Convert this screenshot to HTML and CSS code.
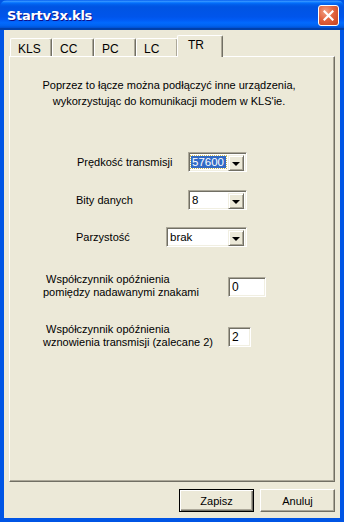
FILE: index.html
```html
<!DOCTYPE html>
<html lang="pl">
<head>
  <meta charset="UTF-8">
  <title>Startv3x.kls</title>
  <link rel="stylesheet" href="styles.css">
</head>
<body>

  <div class="window">
    <!-- Pasek tytułu -->
    <div class="titlebar">
      <span class="title">Startv3x.kls</span>
      <button class="close-btn" aria-label="Zamknij">
        <svg width="11" height="11" viewBox="0 0 11 11">
          <path d="M1.5 1.5 L9.5 9.5 M9.5 1.5 L1.5 9.5" stroke="#fff" stroke-width="2.2" stroke-linecap="square"/>
        </svg>
      </button>
    </div>

    <div class="client">
      <!-- Zakładki -->
      <div class="tabs">
        <div class="tab">KLS</div>
        <div class="tab">CC</div>
        <div class="tab">PC</div>
        <div class="tab">LC</div>
        <div class="tab active">TR</div>
      </div>

      <div class="panel">
        <p class="intro">Poprzez to łącze można podłączyć inne urządzenia,<br>wykorzystując do komunikacji modem w KLS'ie.</p>

        <div class="field-row row-speed">
          <span class="label">Prędkość transmisji</span>
          <div class="combo">
            <div class="combo-value"><span class="selected">57600</span></div>
            <div class="combo-btn"><span class="arrow"></span></div>
          </div>
        </div>

        <div class="field-row row-bits">
          <span class="label">Bity danych</span>
          <div class="combo">
            <div class="combo-value">8</div>
            <div class="combo-btn"><span class="arrow"></span></div>
          </div>
        </div>

        <div class="field-row row-parity">
          <span class="label">Parzystość</span>
          <div class="combo combo-wide">
            <div class="combo-value">brak</div>
            <div class="combo-btn"><span class="arrow"></span></div>
          </div>
        </div>

        <div class="delay-row delay-chars">
          <span class="delay-label">&nbsp;Współczynnik opóźnienia<br>pomiędzy nadawanymi znakami</span>
          <div class="textbox textbox-wide">0</div>
        </div>

        <div class="delay-row delay-restart">
          <span class="delay-label">&nbsp;Współczynnik opóźnienia<br>wznowienia transmisji (zalecane 2)</span>
          <div class="textbox textbox-narrow">2</div>
        </div>
      </div>

      <!-- Przyciski -->
      <div class="buttons">
        <button class="btn btn-default">Zapisz</button>
        <button class="btn">Anuluj</button>
      </div>
    </div>
  </div>

</body>
</html>
```

FILE: styles.css
```css
/* Podstawowe */
body {
  margin: 0;
  width: 344px;
  height: 522px;
  overflow: hidden;
  font-family: 'Liberation Sans', Arial, sans-serif;
  font-size: 11px;
  color: #000;
}

.window {
  width: 344px;
  height: 522px;
  display: flex;
  flex-direction: column;
  background: #0055e5;
  box-sizing: border-box;
}

/* Pasek tytułu */
.titlebar {
  height: 30px;
  flex: none;
  display: flex;
  align-items: center;
  justify-content: space-between;
  padding: 0 5px 0 7px;
  background: linear-gradient(to bottom,
    #0058ee 0%, #3593ff 4%, #288eff 6%, #127dff 8%, #036ffc 10%,
    #0262ee 14%, #0057e5 20%, #0054e3 24%, #0055eb 56%, #005bf5 66%,
    #026afe 76%, #0062ef 86%, #0052d6 92%, #0040ab 94%, #0040ab 100%);
  border-radius: 7px 7px 0 0;
}

.title {
  color: #fff;
  font-family: 'DejaVu Sans', sans-serif;
  font-weight: bold;
  font-size: 13px;
  letter-spacing: -0.3px;
  text-shadow: 1px 1px #0f1089;
  margin-top: 1px;
}

.close-btn {
  width: 21px;
  height: 21px;
  padding: 0;
  border: 1px solid #fff;
  border-radius: 3px;
  background: radial-gradient(circle at 35% 30%, #f2a184 0%, #e2643f 45%, #c4401e 100%);
  display: flex;
  align-items: center;
  justify-content: center;
  margin-top: 1px;
}

/* Obszar klienta */
.client {
  flex: 1;
  display: flex;
  flex-direction: column;
  background: #ece9d8;
  margin: 0 4px 4px 4px;
  padding: 5px 5px 0 5px;
}

/* Zakładki */
.tabs {
  display: flex;
  align-items: flex-end;
  height: 21px;
  padding-left: 1px;
  position: relative;
  z-index: 1;
}

.tab {
  width: 42px;
  height: 18px;
  box-sizing: border-box;
  padding: 3px 0 0 7px;
  border-top: 1px solid #fff;
  border-left: 1px solid #fff;
  border-right: 1px solid #716f64;
  box-shadow: inset -1px 0 #aca899;
  border-radius: 2px 2px 0 0;
  background: #ece9d8;
  font-size: 12px;
}

.tab.active {
  width: 46px;
  height: 22px;
  margin: 0 -2px -1px -2px;
  padding: 2px 0 0 10px;
}

.tab + .tab.active {
  margin-left: -1px;
}

.panel {
  height: 426px;
  box-sizing: border-box;
  border-top: 1px solid #fff;
  border-left: 1px solid #fff;
  border-right: 1px solid #716f64;
  border-bottom: 1px solid #716f64;
  box-shadow: inset -1px -1px #aca899;
  background: #ece9d8;
}

.intro {
  margin: 20px 0 0 0;
  text-align: center;
  line-height: 16px;
  padding-right: 6px;
}

/* Wiersze z listami rozwijanymi */
.field-row {
  display: flex;
  align-items: center;
  justify-content: space-between;
  width: 171px;
  margin-left: 66px;
}

.row-speed { margin-top: 43px; margin-left: 67px; width: 170px; }
.row-bits { margin-top: 18px; }
.row-parity { margin-top: 17px; }

.combo {
  width: 59px;
  height: 20px;
  box-sizing: border-box;
  display: flex;
  border-top: 1px solid #aca899;
  border-left: 1px solid #aca899;
  border-right: 1px solid #fff;
  border-bottom: 1px solid #fff;
  box-shadow: inset 1px 1px #716f64, inset -1px -1px #f1efe2;
  background: #fff;
  padding: 2px;
}

.combo-wide { width: 81px; }

.combo-value {
  flex: 1;
  display: flex;
  align-items: center;
  padding-left: 1px;
  font-size: 11.5px;
}

.selected {
  background: #316ac5;
  color: #fff;
  padding: 0 2px 0 1px;
  outline: 1px dotted #c8b85a;
  margin-left: -1px;
}

.combo-btn {
  width: 16px;
  height: 16px;
  box-sizing: border-box;
  background: #ece9d8;
  border-top: 1px solid #f1efe2;
  border-left: 1px solid #f1efe2;
  border-right: 1px solid #716f64;
  border-bottom: 1px solid #716f64;
  box-shadow: inset 1px 1px #fff, inset -1px -1px #aca899;
  display: flex;
  align-items: center;
  justify-content: center;
}

.arrow {
  width: 0;
  height: 0;
  border-left: 4px solid transparent;
  border-right: 4px solid transparent;
  border-top: 4px solid #000;
  margin-top: 1px;
}

/* Współczynniki opóźnienia */
.delay-row {
  display: flex;
  align-items: center;
  margin-left: 33px;
}

.delay-chars { margin-top: 26px; }
.delay-restart { margin-top: 24px; }

.delay-label {
  width: 185px;
  line-height: 13px;
}

.textbox {
  height: 20px;
  box-sizing: border-box;
  background: #fff;
  border-top: 1px solid #aca899;
  border-left: 1px solid #aca899;
  border-right: 1px solid #fff;
  border-bottom: 1px solid #fff;
  box-shadow: inset 1px 1px #716f64, inset -1px -1px #f1efe2;
  padding: 2px 0 0 3px;
  margin-top: 1px;
  font-size: 12px;
}

.textbox-wide { width: 38px; }
.textbox-narrow { width: 23px; }

/* Przyciski na dole */
.buttons {
  display: flex;
  justify-content: flex-end;
  gap: 6px;
  margin-top: 7px;
}

.btn {
  width: 75px;
  height: 23px;
  font-family: 'Liberation Sans', Arial, sans-serif;
  font-size: 11px;
  color: #000;
  background: #ece9d8;
  border-top: 1px solid #fff;
  border-left: 1px solid #fff;
  border-right: 1px solid #716f64;
  border-bottom: 1px solid #716f64;
  box-shadow: inset -1px -1px #aca899;
  padding: 0;
}

.btn-default {
  border: 1px solid #000;
  box-shadow: inset 1px 1px #fff, inset -1px -1px #716f64, inset -2px -2px #aca899;
}
```
